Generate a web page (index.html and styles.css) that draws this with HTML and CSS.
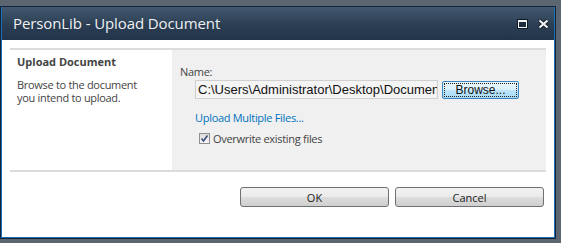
FILE: index.html
```html
<!DOCTYPE html>
<html lang="en">
<head>
  <meta charset="UTF-8" />
  <title>PersonLib - Upload Document</title>
  <link rel="stylesheet" href="styles.css">
</head>
<body>

<div class="dialog">
  <div class="titlebar">
    <span class="title">PersonLib - Upload Document</span>
    <div class="title-icons">
      <svg width="11" height="10" viewBox="0 0 11 10">
        <rect x="0.5" y="0.5" width="10" height="9" fill="#1c2c3e" stroke="#111c28"/>
        <rect x="1.5" y="1.5" width="8" height="7" fill="none" stroke="#f2f2f2"/>
        <rect x="1" y="1" width="9" height="2" fill="#f2f2f2"/>
      </svg>
      <svg width="11" height="10" viewBox="0 0 11 10">
        <path d="M1.5 1.5 L9.5 8.5 M9.5 1.5 L1.5 8.5" stroke="#111c28" stroke-width="4"/>
        <path d="M1.5 1.5 L9.5 8.5 M9.5 1.5 L1.5 8.5" stroke="#f2f2f2" stroke-width="2.2"/>
      </svg>
    </div>
  </div>

  <div class="content">
    <!-- Upload section -->
    <div class="section">
      <div class="section-desc">
        <h3>Upload Document</h3>
        <p>Browse to the document you intend to upload.</p>
      </div>
      <div class="section-body">
        <div class="label">Name:</div>
        <div class="file-row">
          <div class="file-input">C:\Users\Administrator\Desktop\Document.docx</div>
          <button class="browse"><span>Browse...</span></button>
        </div>
        <a href="#" class="link">Upload Multiple Files...</a>
        <label class="check">
          <span class="box">
            <svg width="9" height="9" viewBox="0 0 9 9"><path d="M1.5 4.5 L3.5 7 L7.5 1.5" fill="none" stroke="#3c4e7a" stroke-width="1.6"/></svg>
          </span>
          Overwrite existing files
        </label>
      </div>
    </div>

    <div class="footer">
      <button class="btn">OK</button>
      <button class="btn">Cancel</button>
    </div>
  </div>
</div>

</body>
</html>
```

FILE: styles.css
```css
* {
  box-sizing: border-box;
}
body {
  margin: 0;
  background: #5b6670;
  font-family: 'Open Sans', 'Noto Sans', sans-serif;
  color: #333;
}
.dialog {
  margin-top: 6px;
  width: 556px;
  height: 233px;
  background: white;
  border: 1px solid #10243a;
  box-shadow: inset 0 0 0 1px #1f6fb6;
  display: flex;
  flex-direction: column;
}
.titlebar {
  height: 33px;
  margin: 0 1px;
  background: linear-gradient(#44596f, #2a3d53 55%, #22354a);
  display: flex;
  align-items: center;
  justify-content: space-between;
  padding: 0 5px 2px 11px;
}
.title {
  color: #eef0f2;
  font-size: 15px;
  letter-spacing: -0.1px;
}
.title-icons {
  display: flex;
  gap: 10px;
  margin-top: 2px;
}
.content {
  flex: 1;
  padding: 8px 9px 0 9px;
}
.section {
  display: flex;
  height: 124px;
  border-top: 2px solid #dcdcdc;
  border-bottom: 2px solid #dcdcdc;
}
.section-desc {
  width: 162px;
  padding: 4px 7px 0 7px;
  font-size: 11px;
}
.section-desc h3 {
  margin: 0 0 9px 0;
  font-size: 11px;
  font-weight: bold;
  color: #444;
}
.section-desc p {
  margin: 0;
  line-height: 13px;
  color: #444;
  letter-spacing: -0.3px;
  padding-right: 10px;
}
.section-body {
  flex: 1;
  background: #f0f0f0;
  padding: 15px 0 0 8px;
  font-size: 11px;
  letter-spacing: -0.3px;
}
.label {
  color: #444;
  line-height: 14px;
}
.file-row {
  display: flex;
  align-items: center;
  gap: 4px;
  margin: 1px 0 0 15px;
  letter-spacing: 0;
}
.file-input {
  width: 243px;
  height: 19px;
  border: 1px solid #cfcfcf;
  background: #f4f4f4;
  font-family: 'Liberation Sans', Arial, sans-serif;
  font-size: 13px;
  line-height: 17px;
  padding-left: 2px;
  white-space: nowrap;
  overflow: hidden;
  color: #111;
}
.browse {
  width: 77px;
  height: 18px;
  border: 1px solid #3d86c4;
  border-radius: 2px;
  background: linear-gradient(#eaf6fd, #d9f0fc 50%, #bee6fd 51%, #a7d9f5);
  font-family: 'Liberation Sans', Arial, sans-serif;
  font-size: 12px;
  color: #111;
  padding: 1px;
  cursor: pointer;
}
.browse span {
  display: block;
  height: 100%;
  border: 1px dotted #222;
  line-height: 12px;
}
.link {
  display: block;
  margin: 12px 0 0 15px;
  color: #0072bc;
  text-decoration: none;
  line-height: 14px;
}
.check {
  display: flex;
  align-items: center;
  gap: 3px;
  margin: 6px 0 0 19px;
  color: #444;
}
.box {
  width: 11px;
  height: 11px;
  border: 1px solid #8f8f8f;
  background: linear-gradient(#dcdcdc, #f6f6f6);
  display: flex;
  align-items: center;
  justify-content: center;
}
.footer {
  display: flex;
  justify-content: flex-end;
  gap: 6px;
  padding: 15px 2px 0 0;
}
.btn {
  width: 149px;
  height: 20px;
  border: 1px solid #707070;
  border-radius: 3px;
  background: linear-gradient(#f2f2f2, #ebebeb 50%, #dddddd 51%, #cfcfcf);
  font-family: 'Open Sans', 'Noto Sans', sans-serif;
  font-size: 11px;
  color: #222;
  cursor: pointer;
  padding: 0;
}
```
